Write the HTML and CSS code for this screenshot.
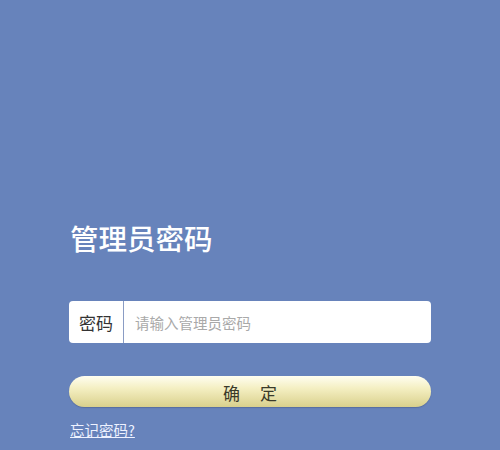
FILE: index.html
```html
<!DOCTYPE html>
<html lang="zh">
<head>
<meta charset="utf-8">
<link rel="stylesheet" href="styles.css">
</head>
<body>
<main class="page">
  <h1 class="title">管理员密码</h1>
  <div class="field">
    <span class="field-label">密码</span>
    <input class="field-input" type="password" placeholder="请输入管理员密码">
  </div>
  <button class="submit" type="button"><span class="submit-char">确</span><span class="submit-char">定</span></button>
  <a class="forgot" href="#">忘记密码?</a>
</main>
</body>
</html>
```
FILE: styles.css
```css
html, body {
  margin: 0;
  padding: 0;
  background: #6783bb;
  font-family: "Noto Sans CJK SC", "Noto Sans", sans-serif;
}
.page {
  width: 500px;
  height: 450px;
  box-sizing: border-box;
  padding: 218px 69px 0 69px;
  display: flex;
  flex-direction: column;
}
.title {
  margin: 0 0 0 1px;
  font-size: 28.5px;
  line-height: 40px;
  font-weight: 500;
  color: #ffffff;
}
.field {
  margin-top: 43px;
  height: 42px;
  background: #ffffff;
  border-radius: 4px;
  display: flex;
  align-items: stretch;
}
.field-label {
  width: 55px;
  box-sizing: border-box;
  border-right: 1px solid #8a9cc4;
  display: flex;
  align-items: center;
  justify-content: center;
  font-size: 17px;
  color: #333333;
}
.field-input {
  flex: 1;
  border: none;
  outline: none;
  background: transparent;
  padding: 0 0 0 11px;
  font-family: inherit;
  font-size: 14.5px;
  color: #333;
}
.field-input::placeholder {
  color: #a9a9a9;
}
.submit {
  margin-top: 33px;
  height: 31px;
  border: none;
  border-radius: 16px;
  background: linear-gradient(to bottom, #fffef0 0%, #f4efc2 40%, #d9d08c 100%);
  box-shadow: 0 1px 1px rgba(60, 70, 110, 0.35);
  font-family: inherit;
  font-size: 17px;
  color: #3a3a2a;
  padding: 2px 0 0 0;
  display: flex;
  align-items: center;
  justify-content: center;
  gap: 20px;
}
.forgot {
  margin-top: 13px;
  margin-left: 1px;
  align-self: flex-start;
  font-size: 14.5px;
  line-height: 20px;
  color: #eef2ff;
  text-decoration: underline;
}
```
